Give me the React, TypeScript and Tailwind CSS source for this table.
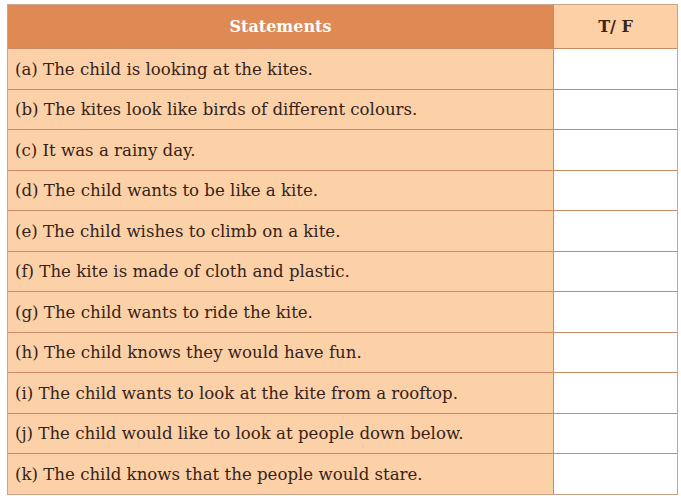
const rows = [
  "(a) The child is looking at the kites.",
  "(b) The kites look like birds of different colours.",
  "(c) It was a rainy day.",
  "(d) The child wants to be like a kite.",
  "(e) The child wishes to climb on a kite.",
  "(f) The kite is made of cloth and plastic.",
  "(g) The child wants to ride the kite.",
  "(h) The child knows they would have fun.",
  "(i) The child wants to look at the kite from a rooftop.",
  "(j) The child would like to look at people down below.",
  "(k) The child knows that the people would stare.",
];

export default function App() {
  return (
    <div className="h-[496px] w-[681px] bg-white pl-[7px] pt-[4px]" style={{ fontFamily: '"DejaVu Serif", "Liberation Serif", serif' }}>
      <div className="w-[671px] border border-[#c9a48a]">
        <div className="flex h-[43px]">
          <div className="flex w-[546px] items-center justify-center border-r border-[#c98a63] bg-[#df8a55] pt-[1px] text-[16px] font-bold text-white">Statements</div>
          <div className="flex flex-1 items-center justify-center bg-[#fdd0a6] pt-[1px] text-[16px] font-bold text-[#3a2417]">T/ F</div>
        </div>
        {rows.map((text) => (
          <div className="flex h-[40.5px] border-t border-[#c98a63]" key={text}>
            <div className="flex w-[546px] items-center border-r border-[#c98a63] bg-[#fdd1a7] pl-[7px] pt-[3px] text-[16.6px] text-[#35231a]">{text}</div>
            <div className="flex-1 bg-white" />
          </div>
        ))}
      </div>
    </div>
  );
}
